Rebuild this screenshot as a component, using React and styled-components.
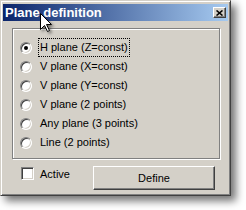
import React from "react";
import styled, { createGlobalStyle } from "styled-components";

const Global = createGlobalStyle`
  html, body {
    margin: 0;
    padding: 0;
    background: #ffffff;
  }
  body {
    font-family: "Liberation Sans", Arial, sans-serif;
    font-size: 11px;
    color: #000;
  }
`;

const Stage = styled.div`
  position: relative;
  width: 246px;
  height: 210px;
  overflow: hidden;
`;

const Window = styled.div`
  width: 231px;
  height: 196px;
  box-sizing: border-box;
  background: #d4d0c8;
  border-top: 1px solid #d4d0c8;
  border-left: 1px solid #d4d0c8;
  border-right: 1px solid #404040;
  border-bottom: 1px solid #404040;
  box-shadow: inset 1px 1px 0 #ffffff, inset -1px -1px 0 #808080,
    5px 5px 8px rgba(0, 0, 0, 0.55);
  padding: 3px 2px 0 2px;
  display: flex;
  flex-direction: column;
`;

const TitleBar = styled.div`
  height: 17px;
  display: flex;
  align-items: center;
  justify-content: space-between;
  padding: 0 2px 0 2px;
  background: linear-gradient(to right, #0a246a, #a6caf0);
`;

const TitleText = styled.span`
  color: #ffffff;
  font-weight: bold;
  font-size: 13px;
`;

const CloseButton = styled.div`
  width: 13px;
  height: 11px;
  box-sizing: border-box;
  background: #d4d0c8;
  border-top: 1px solid #ffffff;
  border-left: 1px solid #ffffff;
  border-right: 1px solid #404040;
  border-bottom: 1px solid #404040;
  box-shadow: inset -1px -1px 0 #808080;
  display: flex;
  align-items: center;
  justify-content: center;
`;

const Body = styled.div`
  padding: 7px 6px 0 9px;
  display: flex;
  flex-direction: column;
`;

const GroupBox = styled.div`
  width: 208px;
  height: 131px;
  border: 1px solid #808080;
  box-shadow: inset 1px 1px 0 #ffffff, 1px 1px 0 #ffffff;
  padding: 9px 0 0 7px;
  box-sizing: border-box;
  display: flex;
  flex-direction: column;
`;

const OptionRow = styled.label`
  height: 19px;
  display: flex;
  align-items: center;
  gap: 6px;
`;

const Radio = styled.span`
  position: relative;
  width: 12px;
  height: 12px;
  box-sizing: border-box;
  border-radius: 50%;
  background: #ffffff;
  border: 1px solid;
  border-color: #808080 #ffffff #ffffff #808080;
  box-shadow: inset 1px 1px 0 #404040, inset -1px -1px 0 #d4d0c8;
  flex: none;
  &::after {
    content: "";
    display: ${(p) => (p.$checked ? "block" : "none")};
    position: absolute;
    left: 3px;
    top: 3px;
    width: 4px;
    height: 4px;
    border-radius: 50%;
    background: #000;
  }
`;

const OptionText = styled.span`
  padding: 2px 1px;
  line-height: 13px;
  border: 1px dotted ${(p) => (p.$focused ? "#000" : "transparent")};
`;

const Footer = styled.div`
  margin-top: 7px;
  display: flex;
  align-items: flex-start;
`;

const CheckRow = styled.label`
  display: flex;
  align-items: center;
  gap: 6px;
  width: 72px;
  padding: 1px 0 0 9px;
  height: 13px;
`;

const CheckBox = styled.span`
  width: 13px;
  height: 13px;
  box-sizing: border-box;
  background: #ffffff;
  border: 1px solid;
  border-color: #808080 #ffffff #ffffff #808080;
  box-shadow: inset 1px 1px 0 #404040, inset -1px -1px 0 #d4d0c8;
  flex: none;
`;

const Button = styled.button`
  width: 122px;
  height: 24px;
  box-sizing: border-box;
  background: #d4d0c8;
  font-family: "Liberation Sans", Arial, sans-serif;
  font-size: 11px;
  color: #000;
  border-top: 1px solid #ffffff;
  border-left: 1px solid #ffffff;
  border-right: 1px solid #404040;
  border-bottom: 1px solid #404040;
  box-shadow: inset -1px -1px 0 #808080;
  padding: 0;
`;

const Cursor = styled.svg`
  position: absolute;
  left: 40px;
  top: 13px;
  filter: drop-shadow(2px 2px 1.5px rgba(0, 0, 0, 0.45));
`;

const options = [
  "H plane (Z=const)",
  "V plane (X=const)",
  "V plane (Y=const)",
  "V plane (2 points)",
  "Any plane (3 points)",
  "Line (2 points)",
];

export default function App() {
  return (
    <Stage>
      <Global />
      <Window>
        <TitleBar>
          <TitleText>Plane definition</TitleText>
          <CloseButton>
            <svg width="7" height="6" viewBox="0 0 7 6">
              <path d="M0.5 0.5 L6.5 5.5 M6.5 0.5 L0.5 5.5" stroke="#000" strokeWidth="1.6" />
            </svg>
          </CloseButton>
        </TitleBar>
        <Body>
          <GroupBox>
            {options.map((o, i) => (
              <OptionRow key={o}>
                <Radio $checked={i === 0} />
                <OptionText $focused={i === 0}>{o}</OptionText>
              </OptionRow>
            ))}
          </GroupBox>
          <Footer>
            <CheckRow>
              <CheckBox />
              <span>Active</span>
            </CheckRow>
            <Button>Define</Button>
          </Footer>
        </Body>
      </Window>
      <Cursor width="13" height="20" viewBox="0 0 13 20">
        <path
          d="M0.5 0.5 L0.5 16.5 L4.5 12.5 L7.5 18.5 L9.5 17.5 L6.5 11.5 L11.5 11.5 Z"
          fill="#fff"
          stroke="#000"
          strokeWidth="1"
        />
      </Cursor>
    </Stage>
  );
}
